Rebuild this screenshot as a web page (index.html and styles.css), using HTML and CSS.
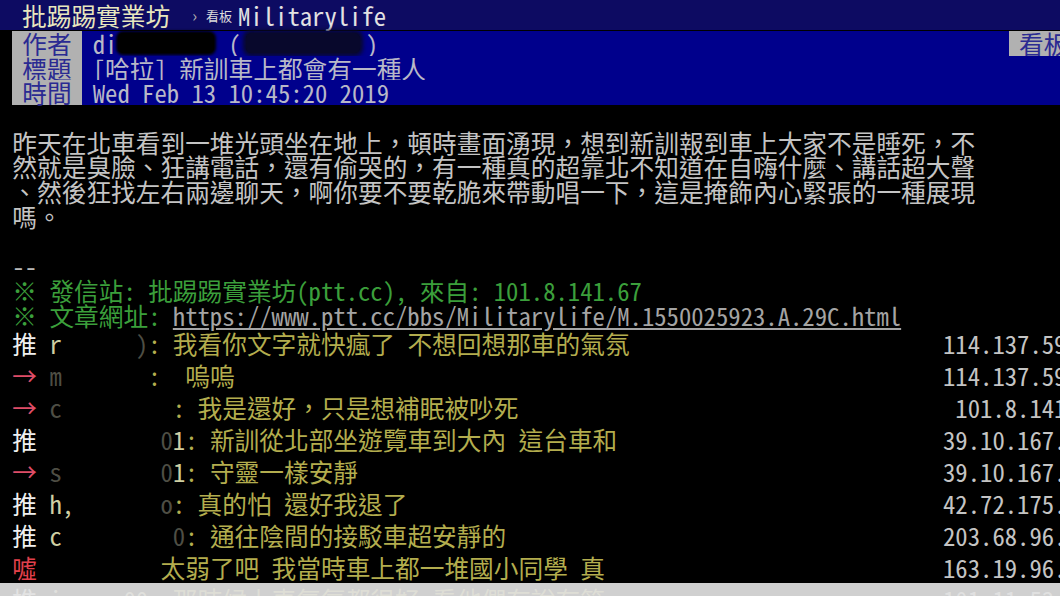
FILE: index.html
```html
<!DOCTYPE html>
<html lang="zh-Hant">

<head>
    <meta charset="UTF-8">
    <title>[哈拉] 新訓車上都會有一種人 - 看板 Militarylife - 批踢踢實業坊</title>
    <link rel="stylesheet" href="styles.css">
</head>

<body>

    <div class="screen">
        <div class="topbar">
            <span class="logo">批踢踢實業坊</span>
            <span class="sep">›</span>
            <span class="board-label">看板</span>
            <span class="board">Militarylife</span>
        </div>

        <div class="article">
            <div class="metaline">
                <span class="meta-tag">作者</span>
                <div class="meta-value author">
                    <span>di</span>
                    <span class="redact"></span>
                    <span>(</span>
                    <span class="redact nick"></span>
                    <span>)</span>
                </div>
                <div class="meta-right">
                    <span class="meta-tag">看板</span>
                    <span class="meta-value">Militarylife</span>
                </div>
            </div>
            <div class="metaline">
                <span class="meta-tag">標題</span>
                <span class="meta-value">[哈拉] 新訓車上都會有一種人</span>
            </div>
            <div class="metaline">
                <span class="meta-tag">時間</span>
                <span class="meta-value">Wed Feb 13 10:45:20 2019</span>
            </div>

            <div class="line"></div>
            <div class="line">昨天在北車看到一堆光頭坐在地上，頓時畫面湧現，想到新訓報到車上大家不是睡死，不</div>
            <div class="line">然就是臭臉、狂講電話，還有偷哭的，有一種真的超靠北不知道在自嗨什麼、講話超大聲</div>
            <div class="line">、然後狂找左右兩邊聊天，啊你要不要乾脆來帶動唱一下，這是掩飾內心緊張的一種展現</div>
            <div class="line">嗎。</div>
            <div class="line"></div>
            <div class="line dash">--</div>
            <div class="line f2">※ 發信站: 批踢踢實業坊(ptt.cc), 來自: 101.8.141.67</div>
            <div class="line f2">※ 文章網址: <a class="link" href="https://www.ptt.cc/bbs/Militarylife/M.1550025923.A.29C.html">https://www.ptt.cc/bbs/Militarylife/M.1550025923.A.29C.html</a></div>

            <div class="push"><span class="push-tag hl">推 </span><span class="push-userid">r      <i class="dim">)</i></span><span class="push-content">: 我看你文字就快瘋了 不想回想那車的氣氛</span><span class="push-ip">114.137.59.216 02/13 10:47</span></div>
            <div class="push"><span class="push-tag arrow">→ </span><span class="push-userid"><i class="dim">m</i>       </span><span class="push-content">:  嗚嗚</span><span class="push-ip">114.137.59.216 02/13 10:47</span></div>
            <div class="push"><span class="push-tag arrow">→ </span><span class="push-userid"><i class="dim">c</i>         </span><span class="push-content">: 我是還好，只是想補眠被吵死</span><span class="push-ip"> 101.8.141.67 02/13 10:48</span></div>
            <div class="push"><span class="push-tag hl">推 </span><span class="push-userid">         <i class="dim">0</i>1</span><span class="push-content">: 新訓從北部坐遊覽車到大內 這台車和</span><span class="push-ip">39.10.167.101 02/13 10:52</span></div>
            <div class="push"><span class="push-tag arrow">→ </span><span class="push-userid"><i class="dim">s</i>        <i class="dim">0</i>1</span><span class="push-content">: 守靈一樣安靜</span><span class="push-ip">39.10.167.101 02/13 10:52</span></div>
            <div class="push"><span class="push-tag hl">推 </span><span class="push-userid">h,       <i class="dim">o</i></span><span class="push-content">: 真的怕 還好我退了</span><span class="push-ip">42.72.175.214 02/13 10:55</span></div>
            <div class="push"><span class="push-tag hl">推 </span><span class="push-userid">c         <i class="dim">0</i></span><span class="push-content">: 通往陰間的接駁車超安靜的</span><span class="push-ip">203.68.96.120 02/13 10:58</span></div>
            <div class="push"><span class="push-tag boo">噓 </span><span class="push-userid">       </span><span class="push-content">  太弱了吧 我當時車上都一堆國小同學 真</span><span class="push-ip">163.19.96.242 02/13 11:01</span></div>
            <div class="push"><span class="push-tag hl">推 </span><span class="push-userid">i     00</span><span class="push-content">: 那時候上車氣氛都很好 看他們有說有笑</span><span class="push-ip">101.11.53.187 02/13 11:04</span></div>
        </div>
    </div>

    <div class="statusbar"></div>

</body>

</html>
```

FILE: styles.css
```css
body {
    margin: 0;
    background-color: #000;
    overflow: hidden;

    font-family: "Noto Sans Mono CJK TC", "Noto Sans CJK TC", monospace;
    font-feature-settings: "hwid" 1;
    font-size: 24.7px;
    font-weight: 300;
    color: #c4c4c4;
}

.screen {
    width: 1264px;
}

/* top bar */

.topbar {
    height: 30px;
    margin-bottom: 1px;
    padding-left: 22px;
    display: flex;
    align-items: center;
    background-color: #0d0b62;
    white-space: nowrap;
}

.logo {
    color: #e8e7be;
}

.sep {
    margin: 0 9px 0 22px;
    font-size: 16px;
    color: #b0b0b0;
}

.board-label {
    margin-right: 6px;
    font-size: 13px;
    color: #dcdcdc;
}

.board {
    color: #e2e2e2;
}

/* article */

.article {
    padding-left: 12.35px;
}

.metaline {
    display: flex;
    height: 24.7px;
    line-height: 24.7px;
    white-space: pre;
}

.meta-tag {
    padding: 0 10px;
    background-color: #b1b1b1;
    color: #2a2a92;
}

.meta-value {
    flex: 1;
    padding-left: 11px;
    background-color: #00008c;
    color: #b8b8c8;
}

.meta-value.author {
    display: flex;
    align-items: center;
}

.meta-right {
    width: 255px;
    display: flex;
}

/* hidden name blocks */
.redact {
    width: 96px;
    height: 20px;
    margin: 0 14px 0 1px;
    border-radius: 5px;
    background-color: #000;
    box-shadow: 0 0 3px 2px #000;
}

.redact.nick {
    width: 114px;
    margin: 0 6px 0 5px;
    background-color: #08082c;
    box-shadow: 0 0 4px 3px #08082c;
}

.line {
    height: 24.7px;
    line-height: 24.7px;
    white-space: pre;
}

.dash {
    color: #b8b8b8;
}

.f2 {
    color: #3b9f3b;
}

.link {
    color: #a4a4a4;
    text-decoration: underline;
}

/* pushes */

.push {
    display: flex;
    height: 32px;
    line-height: 32px;
    white-space: pre;
}

.push-tag.hl {
    color: #f0f0f0;
}

.push-tag.arrow {
    color: #de4d68;
}

.push-tag.boo {
    color: #e2404c;
}

.push-userid {
    color: #cfcfa2;
}

.push-userid .dim {
    font-style: normal;
    color: #4e4e44;
}

.push-content {
    flex: 1;
    color: #b3ad4e;
}

.push-ip {
    width: 321px;
    flex-shrink: 0;
    color: #c4c4c4;
}

.statusbar {
    position: fixed;
    left: 0;
    right: 0;
    bottom: 0;
    height: 13px;
    background-color: rgba(226, 226, 226, 0.92);
}
```
